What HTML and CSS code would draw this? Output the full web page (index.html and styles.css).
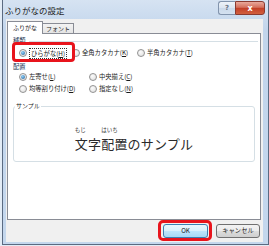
FILE: index.html
```html
<!DOCTYPE html>
<html lang="ja">
<head>
<meta charset="utf-8">
<link rel="stylesheet" href="styles.css">
</head>
<body>
<div class="window">
  <div class="titlebar">
    <span class="title">ふりがなの設定</span>
    <div class="caption-btns">
      <span class="cbtn help">?</span>
      <span class="cbtn close">x</span>
    </div>
  </div>
  <div class="client">
    <div class="tabs">
      <div class="tab active">ふりがな</div>
      <div class="tab">フォント</div>
    </div>
    <div class="panel">
      <div class="ghead"><span>種類</span><i class="gline"></i></div>
      <div class="row kind">
        <div class="opt hl"><span class="radio on"></span><span class="focus">ひらがな(<u>H</u>)</span></div>
        <div class="opt"><span class="radio"></span><span>全角カタカナ(<u>K</u>)</span></div>
        <div class="opt"><span class="radio"></span><span>半角カタカナ(<u>T</u>)</span></div>
      </div>
      <div class="ghead second"><span>配置</span></div>
      <div class="row place">
        <div class="opt"><span class="radio on"></span><span>左寄せ(<u>L</u>)</span></div>
        <div class="opt"><span class="radio"></span><span>中央揃え(<u>C</u>)</span></div>
        <div class="opt"><span class="radio"></span><span>均等割り付け(<u>D</u>)</span></div>
        <div class="opt"><span class="radio"></span><span>指定なし(<u>N</u>)</span></div>
      </div>
      <div class="sample">
        <span class="slabel">サンプル</span>
        <div class="stext">
          <span class="w"><span class="rt">もじ</span><span class="rb">文字</span></span><span class="w"><span class="rt">はいち</span><span class="rb">配置</span></span><span class="w"><span class="rt">&nbsp;</span><span class="rb">のサンプル</span></span>
        </div>
      </div>
    </div>
    <div class="buttons">
      <button class="btn ok">OK</button>
      <button class="btn">キャンセル</button>
    </div>
  </div>
</div>
</body>
</html>
```

FILE: styles.css
```css
* { box-sizing: border-box; }
body {
  margin: 0;
  width: 269px;
  height: 246px;
  overflow: hidden;
  background: #e3ecf6;
  font-family: "Noto Sans CJK JP", "Noto Sans", sans-serif;
  color: #1a1a1a;
}
.window {
  margin-left: 2px;
  width: 267px;
  height: 245px;
  border: 1px solid #5b6b82;
  border-top: 0;
  background: linear-gradient(#d6e3f2, #c2d5ec 30px, #c4d7ed);
  padding: 0 5px 2px 3px;
  display: flex;
  flex-direction: column;
}
.titlebar {
  height: 19px;
  margin: 0 -3px;
  padding: 0 1px 0 2px;
  display: flex;
  align-items: center;
  justify-content: space-between;
}
.title {
  font-size: 8.5px;
  line-height: 10px;
  color: #1e1e1e;
}
.caption-btns {
  align-self: flex-start;
  margin-top: 1px;
  display: flex;
}
.cbtn {
  height: 14px;
  display: flex;
  align-items: center;
  justify-content: center;
  font-family: "DejaVu Sans", sans-serif;
  font-weight: bold;
}
.help {
  width: 17px;
  border: 1px solid #8294ad;
  border-right: 0;
  border-radius: 3px 0 0 3px;
  background: linear-gradient(#eef3f9, #dbe5f1 50%, #cbd9ea 50%, #d4e1f0);
  color: #6a7586;
  font-size: 7px;
}
.close {
  width: 30px;
  border: 1px solid #8a3a30;
  border-radius: 0 3px 3px 0;
  background: linear-gradient(#e9a99b, #d4705d 45%, #c23f27 50%, #d1603f);
  color: #fff;
  font-size: 8px;
}
.client {
  flex: 1;
  background: #f0f0f0;
  padding: 2px 2px 0 1px;
  display: flex;
  flex-direction: column;
}
.tabs {
  height: 12px;
  display: flex;
  align-items: flex-end;
}
.tab {
  width: 32px;
  height: 10px;
  margin-left: -1px;
  border: 1px solid #898c95;
  border-bottom: 0;
  background: linear-gradient(#f3f3f3, #e4e4e4);
  font-size: 6px;
  line-height: 9px;
  text-align: center;
}
.tab.active {
  width: 36px;
  height: 13px;
  margin-left: 0;
  margin-bottom: -1px;
  background: #fff;
  position: relative;
  z-index: 1;
  line-height: 11px;
}
.panel {
  flex: 1;
  background: #fff;
  border: 1px solid #898c95;
  display: flex;
  flex-direction: column;
  font-size: 6.3px;
}
.ghead {
  margin-top: 3px;
  height: 8px;
  padding-left: 5px;
  display: flex;
  align-items: center;
  line-height: 8px;
  color: #223654;
}
.ghead.second { margin-top: 4px; }
.gline {
  flex: 1;
  border-top: 1px solid #d5dfe5;
  margin: 1px 2px 0 3px;
}
.row {
  display: grid;
  padding-left: 11px;
  grid-auto-rows: 12px;
}
.kind {
  margin-top: 2px;
  grid-template-columns: 53px 65px auto;
}
.place {
  grid-template-columns: 70px auto;
}
.opt {
  display: flex;
  align-items: center;
  gap: 2px;
  line-height: 8px;
  white-space: nowrap;
}
.radio {
  width: 8px;
  height: 8px;
  border-radius: 50%;
  border: 1px solid #929292;
  background: radial-gradient(circle at 40% 35%, #fbfbfb, #dcdcdc);
  display: flex;
  align-items: center;
  justify-content: center;
  flex: none;
}
.radio.on::before {
  content: "";
  width: 4px;
  height: 4px;
  border-radius: 50%;
  background: radial-gradient(circle at 40% 35%, #8fd0f7, #1f5d9a);
}
.focus {
  border: 1px dotted #333;
  padding: 0 1px;
  line-height: 9px;
}
.hl { position: relative; }
.hl::after {
  content: "";
  position: absolute;
  top: -5px;
  right: -3px;
  bottom: -3px;
  left: -7px;
  border: 3px solid #e8141c;
  border-radius: 4px;
}
.sample {
  margin: 11px 5px 0;
  height: 56px;
  border: 1px solid #d5dfe5;
  border-radius: 3px;
  position: relative;
}
.slabel {
  position: absolute;
  top: -5px;
  left: 1px;
  padding: 0 1px;
  background: #fff;
  line-height: 8px;
  font-size: 6px;
}
.stext {
  padding-top: 18px;
  text-align: center;
  white-space: nowrap;
}
.w {
  display: inline-flex;
  flex-direction: column;
  align-items: flex-start;
}
.rt {
  font-size: 5.5px;
  line-height: 6px;
  margin-bottom: 2px;
  color: #333;
}
.rb {
  font-size: 13px;
  line-height: 17px;
  letter-spacing: 0.2px;
  color: #2a2a2a;
}
.buttons {
  height: 22px;
  display: flex;
  justify-content: flex-end;
  align-items: flex-start;
  gap: 8px;
  padding: 4px 1px 0 0;
}
.btn {
  height: 14px;
  width: 44px;
  padding: 0;
  border: 1px solid #707070;
  border-radius: 3px;
  background: linear-gradient(#f2f2f2, #ebebeb 50%, #dddddd 50%, #cfcfcf);
  font-family: "Noto Sans CJK JP", "Noto Sans", sans-serif;
  font-size: 6.3px;
  line-height: 10px;
  color: #1a1a1a;
}
.btn.ok {
  width: 45px;
  border-color: #3c7fb1;
  background: linear-gradient(#eaf6fd, #d9f0fc 50%, #bee6fd 50%, #a7d9f5);
  position: relative;
}
.btn.ok::after {
  content: "";
  position: absolute;
  top: -5px;
  right: -5px;
  bottom: -4px;
  left: -6px;
  border: 3px solid #e8141c;
  border-radius: 5px;
}
```
